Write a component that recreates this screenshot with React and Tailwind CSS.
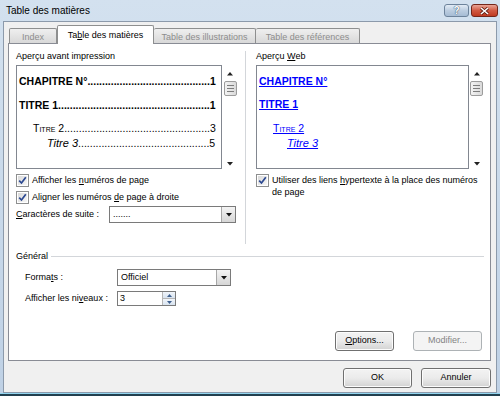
import React from "react";

const U = ({ children }) => <span className="underline underline-offset-[1px]">{children}</span>;

function Checkbox() {
  return (
    <span className="w-[13px] h-[13px] border border-[#8e8f8f] bg-white p-[1px] shrink-0 flex">
      <span className="flex-1 flex items-center justify-center bg-gradient-to-br from-[#d9d9d9] to-[#f7f7f7]">
        <svg width="9" height="9" viewBox="0 0 9 9">
          <path d="M1.2 4.6 L3.5 7 L7.8 1.2" fill="none" stroke="#2b4891" strokeWidth="1.7" />
        </svg>
      </span>
    </span>
  );
}

function DropArrow() {
  return (
    <svg width="6" height="4" viewBox="0 0 6 4">
      <path d="M0 0 H6 L3 3.5 Z" fill="#111" />
    </svg>
  );
}

function Combo({ value, className }) {
  return (
    <div className={`h-[17px] border border-[#7a7a7a] bg-white flex items-stretch ${className}`}>
      <span className="flex-1 pl-[3px] leading-[15px]">{value}</span>
      <span className="w-[14px] border-l border-[#a7a7a7] bg-gradient-to-b from-[#f4f4f4] to-[#d6d6d6] flex items-center justify-center">
        <DropArrow />
      </span>
    </div>
  );
}

function Scrollbar({ className }) {
  return (
    <div className={`flex flex-col items-center bg-white ${className}`}>
      <svg className="mt-[7px]" width="6" height="4" viewBox="0 0 6 4">
        <path d="M0 3.5 H6 L3 0 Z" fill="#222" />
      </svg>
      <div className="mt-[5px] w-[13px] h-[15px] border border-[#9c9c9c] rounded-[2px] bg-gradient-to-r from-[#f3f3f3] to-[#dadada] flex flex-col items-center justify-center gap-[2px]">
        <span className="w-[7px] h-px bg-[#7d7d7d]" />
        <span className="w-[7px] h-px bg-[#7d7d7d]" />
        <span className="w-[7px] h-px bg-[#7d7d7d]" />
      </div>
      <svg className="mt-auto mb-[3px]" width="6" height="4" viewBox="0 0 6 4">
        <path d="M0 0 H6 L3 3.5 Z" fill="#222" />
      </svg>
    </div>
  );
}

function TocLine({ label, dots, num, className }) {
  return (
    <div className={`flex items-baseline whitespace-nowrap ${className}`}>
      <span>{label}</span>
      <span>{".".repeat(dots)}</span>
      <span className="ml-auto">{num}</span>
    </div>
  );
}

function Button({ children, className }) {
  return (
    <div
      className={`h-[20px] border border-[#707070] rounded-[3px] bg-gradient-to-b from-[#f3f3f3] via-[#ebebeb] to-[#d2d2d2] shadow-[inset_0_0_0_1px_#fcfcfc] flex items-center justify-center ${className}`}
    >
      {children}
    </div>
  );
}

export default function App() {
  return (
    <div className="w-[500px] h-[396px] bg-gradient-to-b from-[#d3e1ef] to-[#bfd1e5] flex flex-col overflow-hidden font-['Liberation_Sans',Arial,sans-serif] text-[9px] text-black">
      {/* barre de titre */}
      <div className="h-[21px] flex items-start pl-[6px] pr-[2px]">
        <span className="mt-[5px] text-[10px] leading-[12px]">Table des matières</span>
        <div className="ml-auto mt-[4px] flex gap-[2px]">
          <div className="w-[25px] h-[13px] border border-[#6d839b] rounded-[3px] bg-gradient-to-b from-[#e3ecf6] via-[#bccde0] to-[#a6bcd4] flex items-center justify-center text-[10px] font-bold leading-none text-white [text-shadow:0_0_1px_#2f4a66,0_0_1px_#2f4a66]">
            ?
          </div>
          <div className="w-[27px] h-[13px] border border-[#74261a] rounded-[3px] bg-gradient-to-b from-[#e8a497] via-[#d15a43] to-[#c03a20] flex items-center justify-center">
            <svg width="11" height="8" viewBox="0 0 11 8">
              <path d="M2 1 L9 7 M9 1 L2 7" stroke="#5b1a10" strokeWidth="3" />
              <path d="M2 1 L9 7 M9 1 L2 7" stroke="#fff" strokeWidth="1.6" />
            </svg>
          </div>
        </div>
      </div>

      {/* zone du dialogue */}
      <div className="flex-1 mx-[3px] border border-[#8c9aab] bg-[#f0f0f0] pl-[4px] pr-[5px] flex flex-col">
        {/* onglets */}
        <div className="h-[22px] pl-[1px] flex items-end">
          <div className="w-[48px] h-[16px] border border-b-0 border-[#8e8f8f] rounded-t-[2px] bg-gradient-to-b from-[#efefef] to-[#d7d7d7] text-[#8d8d8d] flex justify-center pt-[2px]">
            Index
          </div>
          <div className="relative z-10 w-[97px] h-[19px] border border-b-0 border-[#8e8f8f] rounded-t-[2px] bg-white flex justify-center pt-[3px]">
            <span>
              Ta<U>b</U>le des matières
            </span>
          </div>
          <div className="w-[102px] h-[16px] border border-b-0 border-l-0 border-[#8e8f8f] rounded-t-[2px] bg-gradient-to-b from-[#efefef] to-[#d7d7d7] text-[#8d8d8d] flex justify-center pt-[2px]">
            Table des illustrations
          </div>
          <div className="w-[104px] h-[16px] border border-b-0 border-l-0 border-[#8e8f8f] rounded-t-[2px] bg-gradient-to-b from-[#efefef] to-[#d7d7d7] text-[#8d8d8d] flex justify-center pt-[2px]">
            Table des références
          </div>
        </div>

        {/* panneau */}
        <div className="-mt-[1px] w-[483px] h-[318px] border border-[#898c95] bg-white flex flex-col">
          <div className="mt-[7px] h-[193px] pl-[7px] flex">
            {/* colonne gauche */}
            <div className="w-[222px] flex flex-col">
              <div className="leading-[11px]">Aperçu avant impression</div>
              <div className="mt-[3px] h-[104px] flex">
                <div className="w-[206px] border border-[#828790] bg-white pl-[2px] pr-[6px] pt-[9px] leading-[13px]">
                  <TocLine label="CHAPITRE N°" dots={42} num="1" className="text-[10.5px] font-bold" />
                  <TocLine label="TITRE 1 " dots={52} num="1" className="mt-[11px] text-[10.5px] font-bold" />
                  <TocLine label="Titre 2" dots={50} num="3" className="mt-[10px] pl-[14px] text-[10.5px] [font-variant:small-caps]" />
                  <TocLine label={<span className="italic text-[11px]">Titre 3</span>} dots={45} num="5" className="mt-[2px] pl-[28px] text-[10.5px]" />
                </div>
                <Scrollbar className="w-[16px]" />
              </div>
              <div className="mt-[5px] h-[13px] flex items-center gap-[3px]">
                <Checkbox />
                <span>
                  Afficher les <U>n</U>uméros de page
                </span>
              </div>
              <div className="mt-[4px] h-[13px] flex items-center gap-[3px]">
                <Checkbox />
                <span>
                  Aligner les numéros <U>d</U>e page à droite
                </span>
              </div>
              <div className="mt-[2px] flex items-center">
                <span className="w-[93px]">
                  <U>C</U>aractères de suite :
                </span>
                <Combo value="......." className="w-[127px]" />
              </div>
            </div>

            <div className="ml-[7px] w-px bg-[#d3d6da]" />

            {/* colonne droite */}
            <div className="ml-[10px] w-[228px] flex flex-col">
              <div className="leading-[11px]">
                Aperçu <U>W</U>eb
              </div>
              <div className="mt-[3px] h-[104px] flex">
                <div className="w-[213px] border border-[#828790] bg-white pl-[2px] pt-[9px] leading-[13px] text-[#0000ff] text-[10.5px]">
                  <div className="font-bold underline">CHAPITRE N°</div>
                  <div className="mt-[10px] font-bold underline">TITRE 1</div>
                  <div className="mt-[11px] pl-[14px]">
                    <span className="underline [font-variant:small-caps]">Titre 2</span>
                  </div>
                  <div className="mt-[2px] pl-[28px]">
                    <span className="underline italic text-[11px]">Titre 3</span>
                  </div>
                </div>
                <Scrollbar className="w-[15px]" />
              </div>
              <div className="mt-[5px] flex items-start gap-[3px]">
                <Checkbox />
                <span className="leading-[12px]">
                  Utiliser des liens <U>h</U>ypertexte à la place des numéros de page
                </span>
              </div>
            </div>
          </div>

          {/* Général */}
          <div className="mt-[7px] h-[11px] pl-[7px] pr-[6px] flex items-center">
            <span>Général</span>
            <span className="flex-1 ml-[3px] h-px bg-[#d3d6da]" />
          </div>
          <div className="mt-[7px] pl-[16px] flex items-center">
            <span className="w-[92px]">
              Forma<U>t</U>s :
            </span>
            <Combo value="Officiel" className="w-[114px]" />
          </div>
          <div className="mt-[5px] pl-[16px] flex items-center">
            <span className="w-[92px]">
              Afficher les ni<U>v</U>eaux :
            </span>
            <div className="w-[59px] h-[15px] border border-[#7a7a7a] bg-white flex">
              <span className="flex-1 pl-[2px] leading-[13px]">3</span>
              <div className="w-[13px] flex flex-col border-l border-[#b5b5b5]">
                <span className="flex-1 bg-gradient-to-b from-[#f1f5fa] to-[#d8e3ef] flex items-center justify-center border-b border-[#b5b5b5]">
                  <svg width="5" height="3" viewBox="0 0 5 3">
                    <path d="M0 3 H5 L2.5 0 Z" fill="#3e5f8e" />
                  </svg>
                </span>
                <span className="flex-1 bg-gradient-to-b from-[#f1f5fa] to-[#d8e3ef] flex items-center justify-center">
                  <svg width="5" height="3" viewBox="0 0 5 3">
                    <path d="M0 0 H5 L2.5 3 Z" fill="#3e5f8e" />
                  </svg>
                </span>
              </div>
            </div>
          </div>

          <div className="mt-[25px] pr-[8px] flex justify-end gap-[19px]">
            <Button className="w-[59px] border-[#3c7fb1] shadow-[inset_0_0_0_1px_#a7e3fb]">
              <span>
                <U>O</U>ptions...
              </span>
            </Button>
            <div className="w-[69px] h-[20px] border border-[#adb2b5] rounded-[3px] bg-[#f4f4f4] text-[#838383] flex items-center justify-center">
              Modifier...
            </div>
          </div>
        </div>

        {/* boutons du bas */}
        <div className="mt-[7px] flex justify-end gap-[9px]">
          <Button className="w-[69px]">OK</Button>
          <Button className="w-[70px]">Annuler</Button>
        </div>
      </div>
      <div className="h-px bg-[#92d5ef]" />
      <div className="h-[2px] bg-[#22404f]" />
    </div>
  );
}
